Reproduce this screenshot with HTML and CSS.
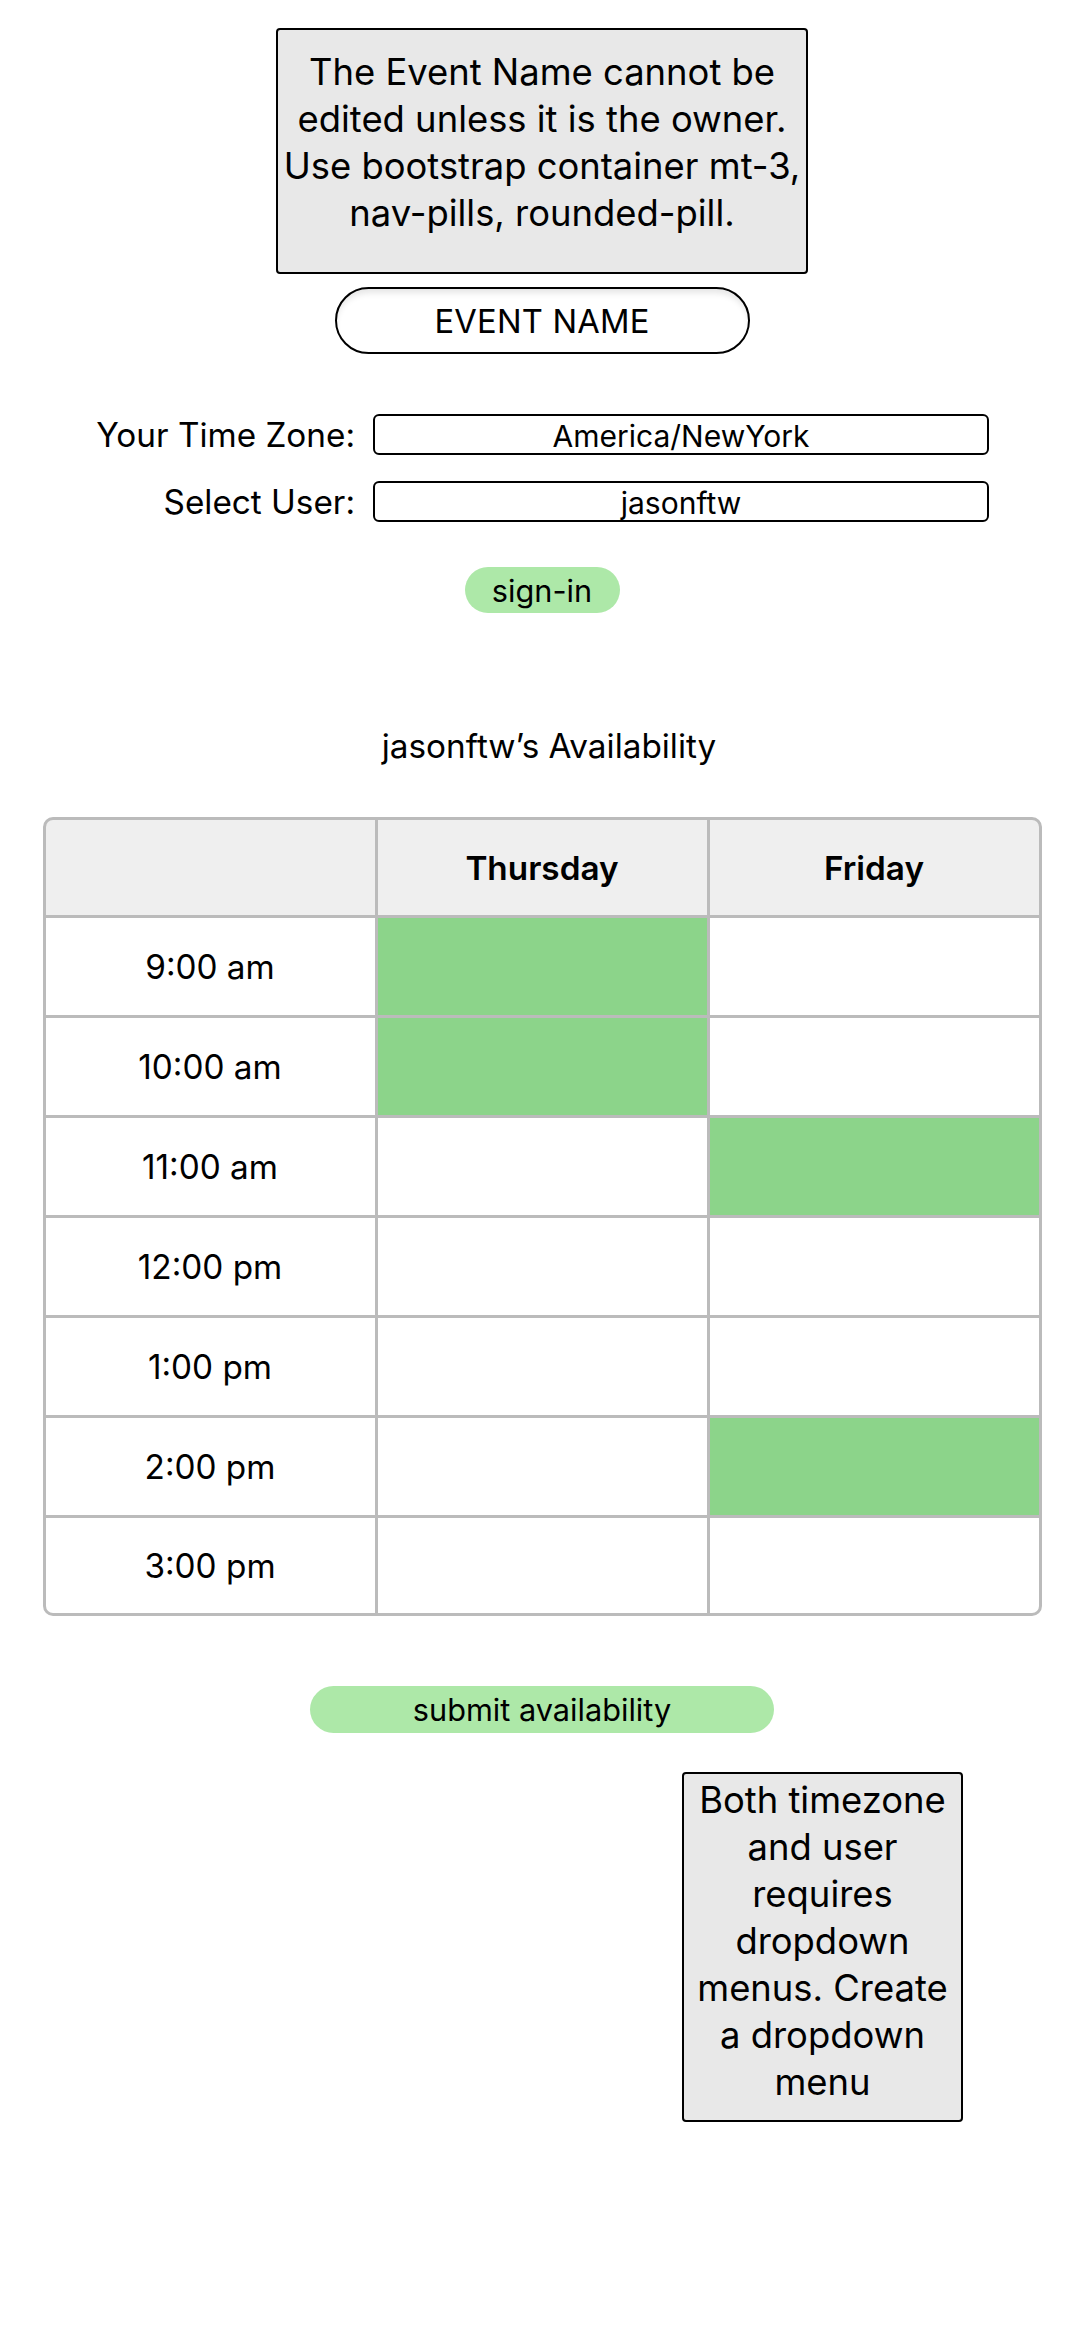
FILE: index.html
```html
<!DOCTYPE html>
<html lang="en">
<head>
<meta charset="utf-8">
<title>Availability</title>
<link rel="stylesheet" href="styles.css">
</head>
<body>
<main class="page">
  <div class="note note-top">The Event Name cannot be<br>edited unless it is the owner.<br>Use bootstrap container mt-3,<br>nav-pills, rounded-pill.</div>
  <div class="event-pill">EVENT NAME</div>

  <div class="form">
    <label class="form-label">Your Time Zone:</label>
    <div class="select">America/NewYork</div>
    <label class="form-label">Select User:</label>
    <div class="select">jasonftw</div>
  </div>

  <button class="btn btn-signin">sign-in</button>

  <h2 class="heading">jasonftw’s Availability</h2>

  <div class="grid">
    <div class="cell head"></div>
    <div class="cell head">Thursday</div>
    <div class="cell head">Friday</div>

    <div class="cell time">9:00 am</div>
    <div class="cell on"></div>
    <div class="cell"></div>

    <div class="cell time">10:00 am</div>
    <div class="cell on"></div>
    <div class="cell"></div>

    <div class="cell time">11:00 am</div>
    <div class="cell"></div>
    <div class="cell on"></div>

    <div class="cell time">12:00 pm</div>
    <div class="cell"></div>
    <div class="cell"></div>

    <div class="cell time">1:00 pm</div>
    <div class="cell"></div>
    <div class="cell"></div>

    <div class="cell time">2:00 pm</div>
    <div class="cell"></div>
    <div class="cell on"></div>

    <div class="cell time">3:00 pm</div>
    <div class="cell"></div>
    <div class="cell"></div>
  </div>

  <button class="btn btn-submit">submit availability</button>

  <div class="note note-bottom">Both timezone<br>and user<br>requires<br>dropdown<br>menus. Create<br>a dropdown<br>menu</div>
</main>
</body>
</html>
```

FILE: styles.css
```css
* { box-sizing: border-box; }

html, body {
  margin: 0;
  padding: 0;
  background: #fff;
}

body {
  font-family: Inter, "Noto Sans", "DejaVu Sans", sans-serif;
  color: #000;
}

.page {
  width: 1084px;
  display: flex;
  flex-direction: column;
  align-items: center;
  padding-top: 28px;
}

.note {
  background: #e8e8e8;
  border: 2px solid #000;
  border-radius: 4px;
  font-size: 36.4px;
  line-height: 47px;
  text-align: center;
  white-space: nowrap;
}

.note-top {
  width: 532px;
  height: 246px;
  padding-top: 19px;
}

.event-pill {
  margin-top: 13px;
  width: 415px;
  height: 67px;
  border: 2px solid #000;
  border-radius: 34px;
  background: #fff;
  box-shadow: inset 0 6px 6px -2px rgba(0, 0, 0, 0.10);
  font-size: 32.7px;
  display: flex;
  align-items: center;
  justify-content: center;
  letter-spacing: 0.2px;
}

.form {
  margin-top: 60px;
  align-self: flex-start;
  display: grid;
  grid-template-columns: 355px 616px;
  column-gap: 18px;
  row-gap: 26px;
  align-items: center;
}

.form-label {
  text-align: right;
  font-size: 33.3px;
}

.select {
  height: 41px;
  border: 2px solid #000;
  border-radius: 6px;
  font-size: 30px;
  display: flex;
  align-items: center;
  justify-content: center;
  line-height: 1;
  padding-top: 2px;
}

.btn {
  font-family: Inter, "Noto Sans", "DejaVu Sans", sans-serif;
  border: none;
  background: #ade8a8;
  color: #000;
  font-size: 30.7px;
  padding: 0;
  display: flex;
  align-items: center;
  justify-content: center;
}

.btn-signin {
  margin-top: 45px;
  width: 155px;
  height: 46px;
  border-radius: 23px;
}

.heading {
  margin: 113px 0 0 14px;
  font-size: 33.3px;
  font-weight: 400;
  line-height: 40px;
}

.grid {
  margin-top: 51px;
  width: 999px;
  display: grid;
  grid-template-columns: repeat(3, 1fr);
  grid-template-rows: 95px repeat(6, 97px) 95px;
  gap: 3px;
  background: #bbb;
  border: 3px solid #bbb;
  border-radius: 10px;
  overflow: hidden;
}

.cell {
  background: #fff;
  display: flex;
  align-items: center;
  justify-content: center;
  font-size: 33.3px;
}

.cell.head {
  background: #efefef;
  font-weight: 600;
}

.cell.on {
  background: #8cd48a;
}

.btn-submit {
  margin-top: 70px;
  width: 464px;
  height: 47px;
  border-radius: 24px;
}

.note-bottom {
  margin-top: 39px;
  align-self: flex-start;
  margin-left: 682px;
  width: 281px;
  height: 350px;
  padding-top: 3px;
}
```
